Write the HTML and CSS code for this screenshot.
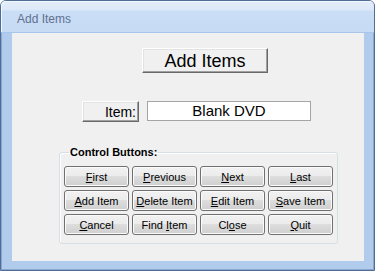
FILE: index.html
```html
<html>
<head>
<title>Add Items</title>
<link rel="stylesheet" href="styles.css">
</head>
<body>

<div class='window'>
  <div class='titlebar'>
    <span>Add Items</span>
  </div>
  <div class='client'>
    <div class='header'>
      <button class='classic big'>Add Items</button>
    </div>
    <div class='item-row'>
      <button class='classic label'>Item:</button>
      <div class='textbox'>Blank DVD</div>
    </div>
    <fieldset class='group'>
      <legend>Control Buttons:</legend>
      <div class='grid'>
        <button class='aero'><u>F</u>irst</button>
        <button class='aero'><u>P</u>revious</button>
        <button class='aero'><u>N</u>ext</button>
        <button class='aero'><u>L</u>ast</button>
        <button class='aero'><u>A</u>dd Item</button>
        <button class='aero'><u>D</u>elete Item</button>
        <button class='aero'><u>E</u>dit Item</button>
        <button class='aero'><u>S</u>ave Item</button>
        <button class='aero'><u>C</u>ancel</button>
        <button class='aero'>Find <u>I</u>tem</button>
        <button class='aero'>Cl<u>o</u>se</button>
        <button class='aero'><u>Q</u>uit</button>
      </div>
    </fieldset>
  </div>
</div>

</body>
</html>
```

FILE: styles.css
```css
body{
  margin:0px;
  background:#ffffff;
  font-family:"Liberation Sans", Arial, sans-serif;
}

.window{
  width:375px;
  height:271px;
  box-sizing:border-box;

  display:flex;
  flex-direction:column;

  border:1px solid #4f6d96;
  border-radius:6px 6px 0px 0px;
  box-shadow:inset 1px 0px 0px #8aa6cc, inset -1px 0px 0px #8aa6cc, inset 0px -1px 0px #8aa6cc;

  background:#b1cbed;
}

.titlebar{
  height:32px;
  box-sizing:border-box;
  padding:0px 16px;

  display:flex;
  align-items:center;

  border-radius:5px 5px 0px 0px;
  border-bottom:1px solid #a6c6ec;
  background:linear-gradient(#e4edf9 0px, #dce8f8 9px, #cadef6 10px, #c6dbf4 100%);
  box-shadow:inset 1px 1px 0px #f2f7fd;
}
.titlebar span{
  font-size:12px;
  color:#5f7090;
  padding-top:4px;
}

.client{
  flex:1;
  margin:0px 10px 9px 11px;

  background:#f0f0f0;
}

.header{
  padding:15px 0px 0px 130px;
}

button{
  font-family:"Liberation Sans", Arial, sans-serif;
  color:#000000;
  margin:0px;
  padding:0px;
}

.classic{
  display:block;
  box-sizing:border-box;

  background:#f0f0f0;
  border:1px solid;
  border-color:#ffffff #696969 #696969 #ffffff;
  box-shadow:inset -1px -1px 0px #a0a0a0, inset 1px 1px 0px #e3e3e3;
}
.classic.big{
  width:126px;
  height:25px;

  font-size:18px;
  line-height:22px;
}

.item-row{
  display:flex;
  gap:8px;

  padding:28px 0px 0px 70px;
}
.classic.label{
  width:57px;
  height:21px;

  font-size:14px;
  text-align:right;
  padding-right:2px;
}
.textbox{
  width:164px;
  height:20px;
  box-sizing:border-box;

  border:1px solid #a5a5a5;
  background:#ffffff;

  font-size:15px;
  line-height:18px;
  text-align:center;
}

.group{
  width:279px;
  box-sizing:border-box;

  margin:24px 0px 0px 47px;
  padding:8px 4px 8px 4px;

  border:1px solid #d5dfe5;
  border-radius:3px;
  box-shadow:inset 1px 1px 0px #ffffff;
}
.group legend{
  font-size:11px;
  font-weight:700;
  color:#000000;
  padding:0px 1px;
  margin-left:5px;
}

.grid{
  display:grid;
  grid-template-columns:repeat(4, 65px);
  grid-auto-rows:21px;
  column-gap:3px;
  row-gap:3px;
}

.aero{
  box-sizing:border-box;

  border:1px solid #707070;
  border-radius:3px;
  background:linear-gradient(#f2f2f2 0%, #ebebeb 50%, #dddddd 50%, #cfcfcf 100%);
  box-shadow:inset 0px 0px 0px 1px #fbfbfb;

  font-size:11px;
  padding-top:1px;
}
.aero u{
  text-decoration:underline;
  text-underline-offset:1px;
}
```
